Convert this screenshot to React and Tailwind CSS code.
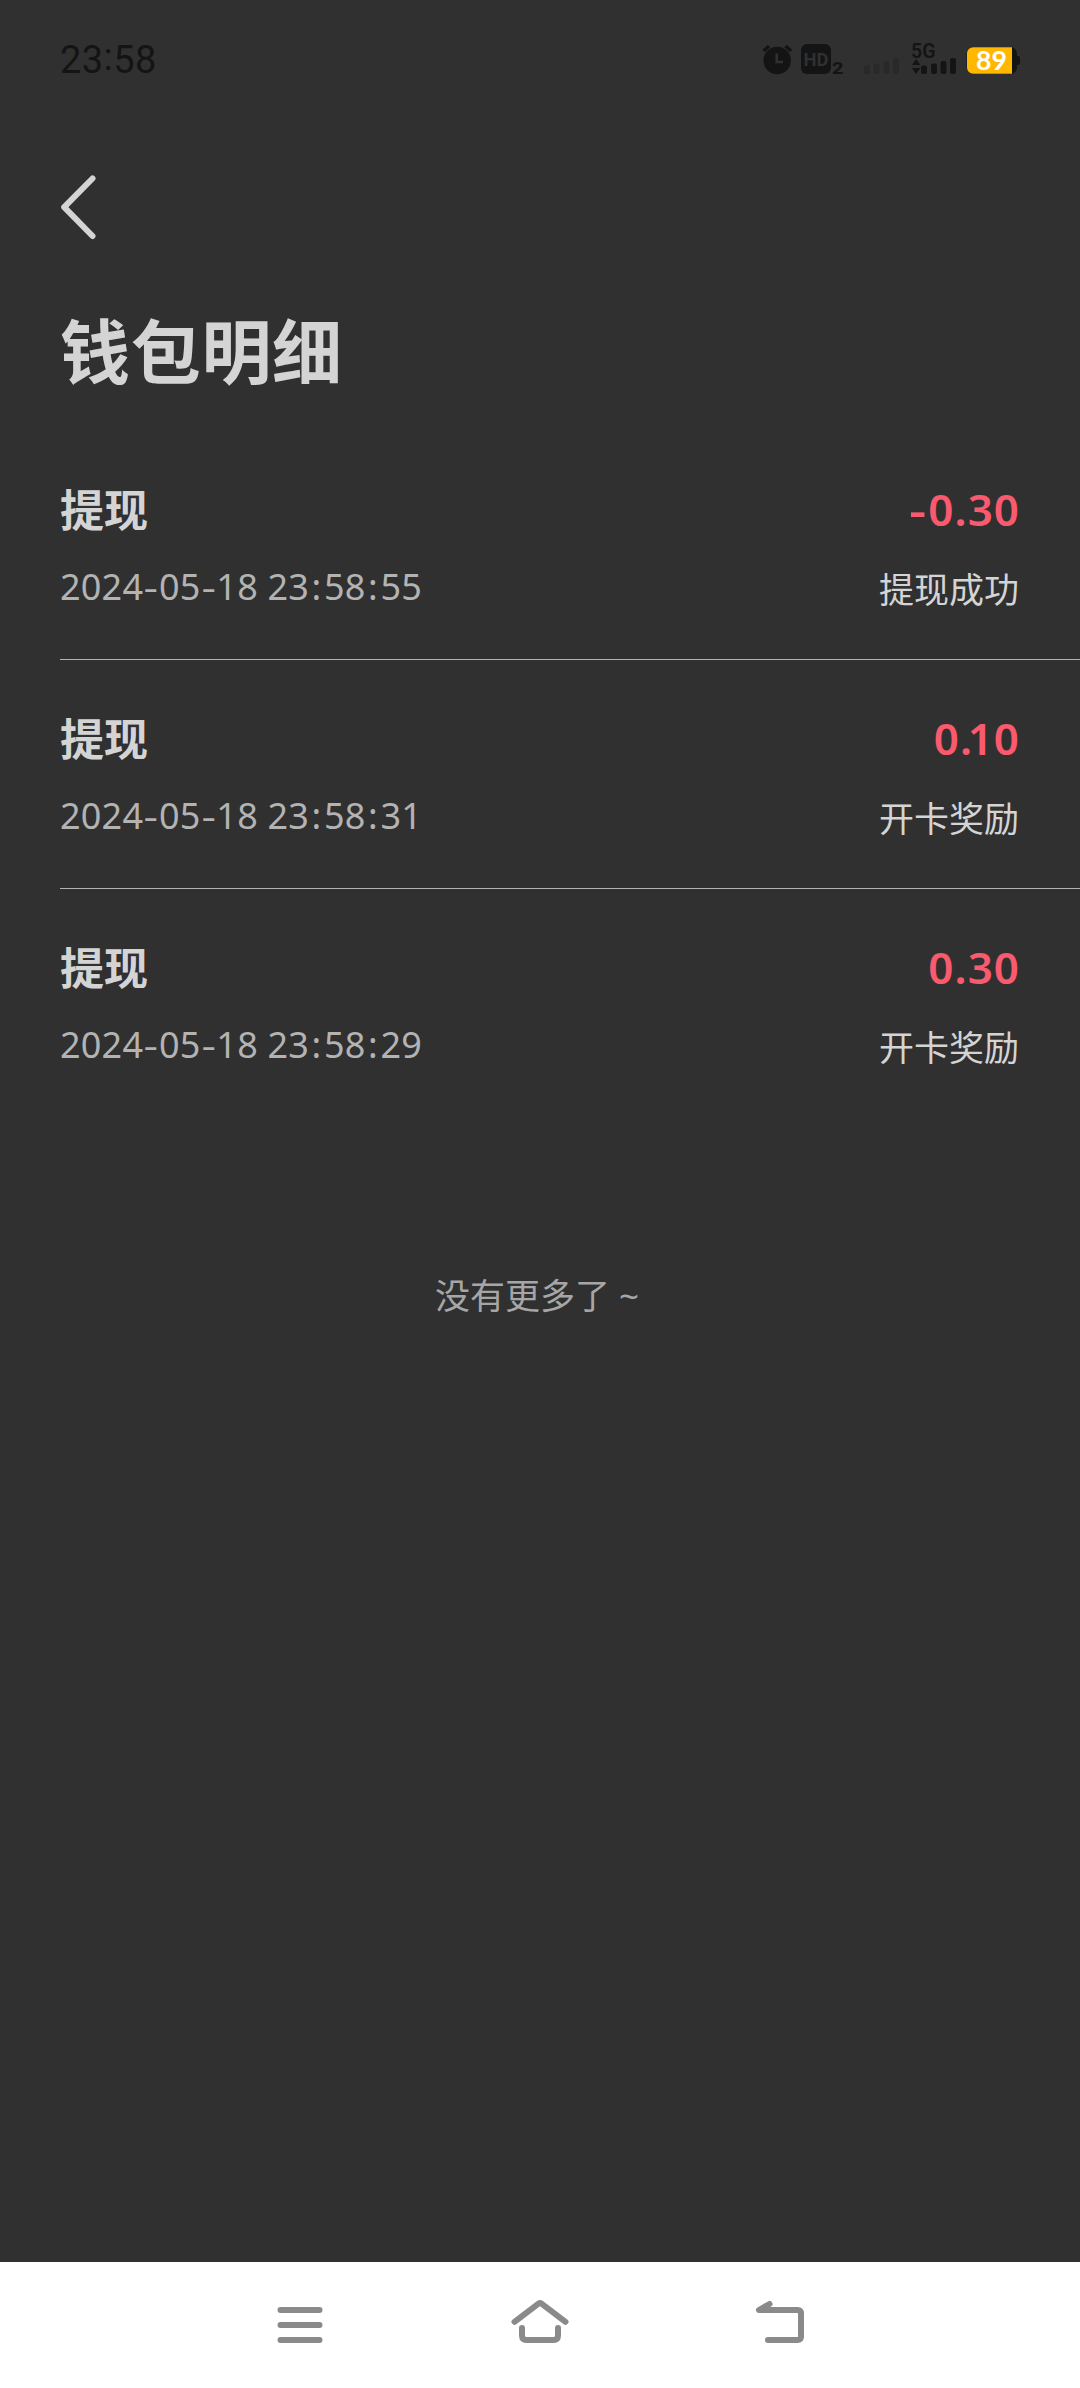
import React from 'react';

const records = [
    { title: '提现', time: '2024-05-18 23:58:55', amount: '-0.30', status: '提现成功' },
    { title: '提现', time: '2024-05-18 23:58:31', amount: '0.10', status: '开卡奖励' },
    { title: '提现', time: '2024-05-18 23:58:29', amount: '0.30', status: '开卡奖励' },
];

const StatusBar = () => (
    <div className="flex h-[120px] items-start justify-between pl-[60px] pr-[60px] pt-[43px] text-[#141414]">
        <div className="h-8 font-['Roboto',sans-serif] text-[38px] leading-[34px] tracking-[0.4px]">
            23<span className="relative -top-[3px]">:</span>58
        </div>
        <div className="flex h-8">
            {/* alarm */}
            <svg className="h-8 w-[30px]" viewBox="0 0 30 32">
                <circle cx="15.2" cy="17.5" r="13.7" fill="#141414" />
                <path d="M1.5 8 L7 3 M29 8 L23.5 3" stroke="#141414" strokeWidth="3.4" fill="none" />
                <path d="M14.7 10.5 V19 H21" stroke="#303030" strokeWidth="2.6" fill="none" />
            </svg>
            {/* HD voice, second sim */}
            <svg className="ml-[9px] h-8 w-[46px] overflow-visible" viewBox="0 0 46 32">
                <rect x="0" y="1" width="30" height="30" rx="6" fill="#141414" />
                <text x="2.6" y="23" fontFamily="Roboto, sans-serif" fontWeight="700" fontSize="18.5" textLength="25" lengthAdjust="spacingAndGlyphs" fill="#303030">HD</text>
                <text x="31" y="30.5" fontFamily="Roboto, sans-serif" fontWeight="800" fontSize="17" textLength="11.5" lengthAdjust="spacingAndGlyphs" fill="#141414">2</text>
            </svg>
            <svg className="ml-[17px] h-8 w-[35px]" viewBox="0 0 35 32" fill="#292929">
                <rect x="0" y="22.5" width="6" height="8.5" rx="2" />
                <rect x="9.5" y="20.5" width="6" height="10.5" rx="2" />
                <rect x="19.5" y="18" width="6" height="13" rx="2" />
                <rect x="29" y="15" width="6" height="16" rx="2" />
            </svg>
            <svg className="-mt-2 ml-3 h-10 w-[46px] overflow-visible" viewBox="0 -8 46 40" fill="#141414">
                <text x="0" y="15" fontFamily="Roboto, sans-serif" fontWeight="600" fontSize="19.5" textLength="24.5" lengthAdjust="spacingAndGlyphs">5G</text>
                <path d="M1 22 L5 16 L9.5 22 Z M1 25 H9.5 L5 31 Z" />
                <rect x="10" y="22.5" width="6" height="8.5" rx="2" />
                <rect x="20" y="20.5" width="6" height="10.5" rx="2" />
                <rect x="29.5" y="18" width="6" height="13" rx="2" />
                <rect x="39" y="15" width="6" height="16" rx="2" />
            </svg>
            <svg className="ml-[9px] h-8 w-[54px]" viewBox="0 0 54 32">
                <rect x="0.5" y="4" width="50.5" height="27" rx="6.5" fill="#141414" />
                <rect x="50" y="13" width="4" height="9" rx="2" fill="#141414" />
                <path d="M46 4.3 H7 a6 6 0 0 0 -6 6 V24.7 a6 6 0 0 0 6 6 H46 Z" fill="#ffb700" />
                <text x="10" y="27" fontFamily="Lato, sans-serif" fontWeight="700" fontSize="26" textLength="31" lengthAdjust="spacingAndGlyphs" fill="#fff">89</text>
            </svg>
        </div>
    </div>
);

const separators = {
    '-': 'inline-block px-[2px] scale-x-125',
    ':': 'px-[2.5px]',
};

// digits with wider separators
const Time = ({ value }) => (
    <p className="flex h-[50px] text-[36px] leading-[50px] tracking-[0.2px] text-[#b3b3b3] whitespace-pre">
        {value.split(/([-:])/).map((part, i) => (
            <span key={i} className={separators[part] || ''}>{part}</span>
        ))}
    </p>
);

const glyphs = {
    '-': 'inline-block pr-[2px] scale-x-120',
    '.': 'tracking-[-4.5px]',
};

// the point sits tighter in front of a 1
const Amount = ({ value }) => (
    <p className="h-16 text-[44px] font-semibold leading-[66px] tracking-[1px] text-[#fa5a6e]">
        {value.split(/(-|\.(?=1))/).map((part, i) => (
            <span key={i} className={glyphs[part] || ''}>{part}</span>
        ))}
    </p>
);

const Record = ({ item, last }) => (
    <li className={`flex h-[229px] justify-between pr-[60px] pt-[45px] ${last ? '' : 'border-b border-[#b3b3b3]'}`}>
        <div>
            <h2 className="mt-[2px] h-16 text-[44px] font-bold leading-[64px] text-[#d4d4d4]">{item.title}</h2>
            <div className="mt-5"><Time value={item.time} /></div>
        </div>
        <div className="text-right">
            <Amount value={item.amount} />
            <p className="mt-[25px] pr-[1px] text-[35px] leading-[50px] text-[#d4d4d4]">{item.status}</p>
        </div>
    </li>
);

const NavBar = () => (
    <nav className="flex h-[126px] justify-center gap-[168px] bg-white pt-[27px]">
        <svg className="size-[72px]" viewBox="0 0 72 72" fill="none" stroke="#8a8a8a" strokeWidth="6" strokeLinecap="round">
            <path d="M16.5 21 H55.5 M16.5 36 H55.5 M16.5 51 H55.5" />
        </svg>
        <svg className="size-[72px]" viewBox="0 0 72 72" fill="none" stroke="#8a8a8a" strokeWidth="6" strokeLinecap="round" strokeLinejoin="round">
            <path d="M10.5 32.8 L34.5 14.7 Q36 13.6 37.5 14.7 L61.5 32.8" />
            <path d="M18 39 V46.5 Q18 51 22.5 51 H49.5 Q54 51 54 46.5 V39" />
        </svg>
        <svg className="size-[72px]" viewBox="0 0 72 72" fill="none" stroke="#8a8a8a" strokeWidth="6" strokeLinecap="round" strokeLinejoin="round">
            <path d="M25.5 15 L15 21 H53.5 Q57 21 57 24.5 V47.5 Q57 51 53.5 51 H24" />
        </svg>
    </nav>
);

const App = () => {
    return (
        <div className="flex h-[2388px] w-[1080px] flex-col bg-[#303030] font-['Noto_Sans','Noto_Sans_CJK_SC',sans-serif]">
            <StatusBar />
            <header className="pl-[60px]">
                <button className="mt-[52px] block h-[70px]">
                    <svg className="h-[70px] w-10" viewBox="0 0 40 70" fill="none" stroke="#d4d4d4" strokeWidth="6" strokeLinecap="round" strokeLinejoin="round">
                        <path d="M32.5 6.5 L4.2 35.2 L32.5 64" />
                    </svg>
                </button>
                <h1 className="mt-[62px] h-24 text-[70px] font-bold leading-[96px] tracking-[0.7px] text-[#d4d4d4]">钱包明细</h1>
            </header>
            <ul className="mt-[31px] pl-[60px]">
                {records.map((item, i) => (
                    <Record key={i} item={item} last={i === records.length - 1} />
                ))}
            </ul>
            <p className="mt-[153px] pr-[6px] text-center text-[35px] leading-[50px] text-[#a6a6a6]">
                没有更多了 ~
            </p>
            <div className="grow" />
            <NavBar />
        </div>
    );
};

export default App;
